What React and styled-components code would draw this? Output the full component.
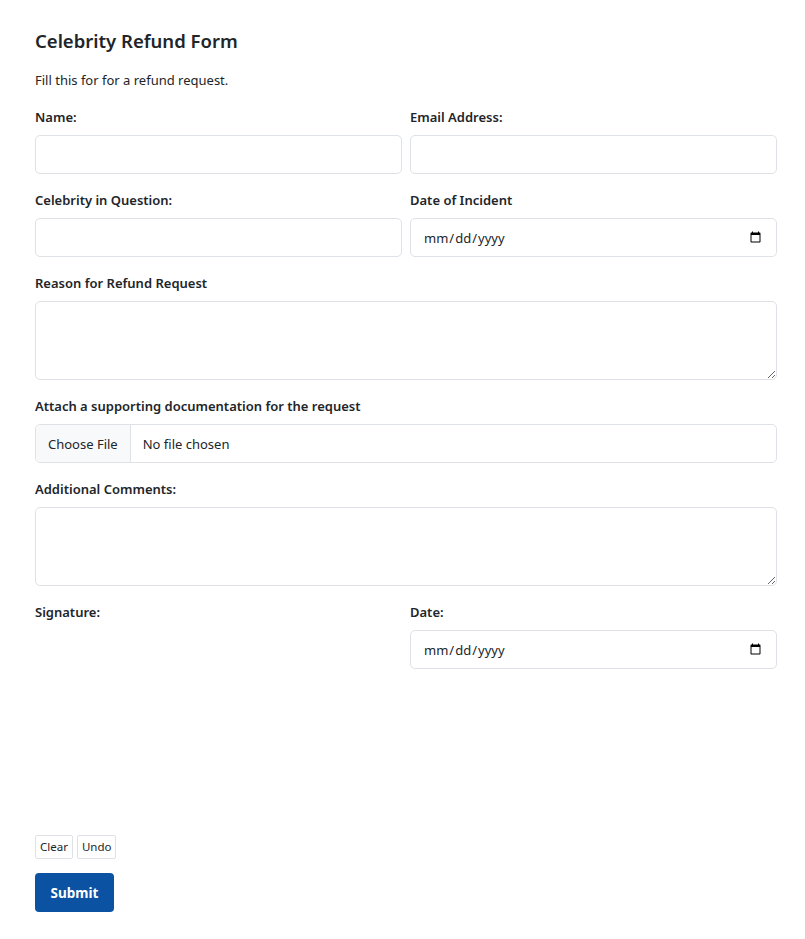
import React from "react";
import styled, { createGlobalStyle } from "styled-components";

const Global = createGlobalStyle`
  html, body { margin: 0; padding: 0; background: #fff; }
  body { font-family: "Noto Sans", "Open Sans", sans-serif; color: #212529; }
  * { box-sizing: border-box; }
`;

const Page = styled.form`
  width: 742px;
  margin: 0 0 0 35px;
  padding: 29px 0 28px;
  display: flex;
  flex-direction: column;
`;

const Title = styled.h1`
  margin: 0 0 17px;
  font-size: 18.5px;
  line-height: 24px;
  font-weight: 600;
  color: #212529;
`;

const Lead = styled.p`
  margin: 0 0 17px;
  font-size: 13px;
  line-height: 20px;
`;

const Fields = styled.div`
  display: grid;
  grid-template-columns: 1fr 1fr;
  column-gap: 8px;
  row-gap: 16px;
`;

const Field = styled.div`
  display: flex;
  flex-direction: column;
  grid-column: ${(p) => (p.$wide ? "1 / -1" : "auto")};
`;

const Label = styled.label`
  font-size: 13px;
  line-height: 20px;
  font-weight: 600;
  margin-bottom: 8px;
  color: #212529;
`;

const Control = styled.input`
  height: 39px;
  width: 100%;
  padding: 6px 12px;
  font-family: inherit;
  font-size: 13px;
  color: #212529;
  background: #fff;
  border: 1px solid #dee2e6;
  border-radius: 5px;
  outline: none;

  &::file-selector-button {
    font-family: inherit;
    font-size: 13px;
    color: #212529;
    height: 37px;
    padding: 6px 12px;
    margin: -6px 12px -6px -12px;
    border: 0;
    border-right: 1px solid #dee2e6;
    background: #f8f9fa;
  }
`;

const Area = styled.textarea`
  height: 79px;
  width: 100%;
  padding: 6px 12px;
  font-family: inherit;
  font-size: 13px;
  border: 1px solid #dee2e6;
  border-radius: 5px;
  resize: vertical;
  outline: none;
`;

const SigPad = styled.div`
  height: 200px;
`;

const SmallRow = styled.div`
  display: flex;
  gap: 4px;
  margin-top: 5px;
`;

const SmallButton = styled.button`
  font-family: inherit;
  font-size: 11.5px;
  line-height: 16px;
  padding: 3px 4px;
  background: #fff;
  color: #212529;
  border: 1px solid #dee2e6;
  border-radius: 2px;
`;

const Submit = styled.button`
  align-self: flex-start;
  margin-top: 14px;
  width: 79px;
  height: 39px;
  font-family: inherit;
  font-size: 13.5px;
  font-weight: 700;
  color: #fff;
  background: #0b52a3;
  border: 0;
  border-radius: 4px;
`;

export default function App() {
  return (
    <>
      <Global />
      <Page onSubmit={(e) => e.preventDefault()}>
        <Title>Celebrity Refund Form</Title>
        <Lead>Fill this for for a refund request.</Lead>
        <Fields>
          <Field>
            <Label>Name:</Label>
            <Control type="text" />
          </Field>
          <Field>
            <Label>Email Address:</Label>
            <Control type="email" />
          </Field>
          <Field>
            <Label>Celebrity in Question:</Label>
            <Control type="text" />
          </Field>
          <Field>
            <Label>Date of Incident</Label>
            <Control type="date" />
          </Field>
          <Field $wide>
            <Label>Reason for Refund Request</Label>
            <Area />
          </Field>
          <Field $wide>
            <Label>Attach a supporting documentation for the request</Label>
            <Control type="file" />
          </Field>
          <Field $wide>
            <Label>Additional Comments:</Label>
            <Area />
          </Field>
          <Field>
            <Label>Signature:</Label>
            <SigPad />
            <SmallRow>
              <SmallButton type="button">Clear</SmallButton>
              <SmallButton type="button">Undo</SmallButton>
            </SmallRow>
          </Field>
          <Field>
            <Label>Date:</Label>
            <Control type="date" />
          </Field>
        </Fields>
        <Submit type="submit">Submit</Submit>
      </Page>
    </>
  );
}
